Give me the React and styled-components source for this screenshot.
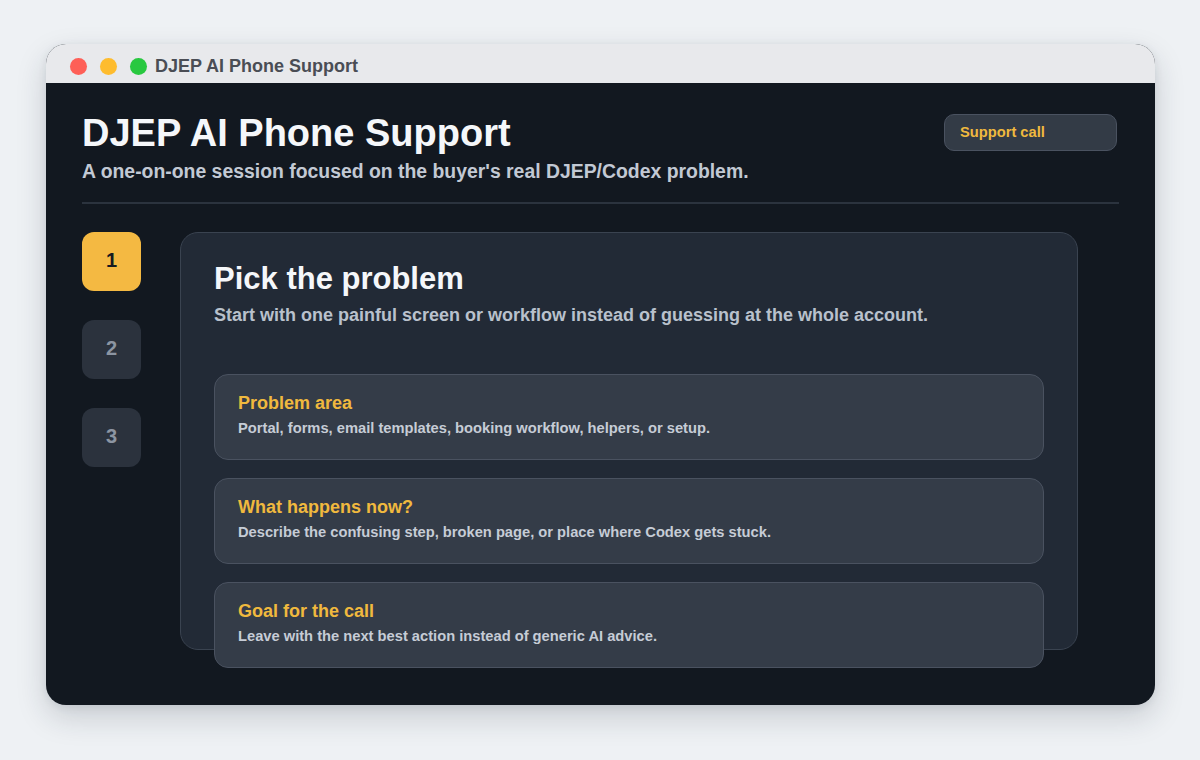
import React from 'react';
import styled, { createGlobalStyle } from 'styled-components';

const GlobalStyle = createGlobalStyle`
  html, body {
    margin: 0;
    padding: 0;
    background: #eef1f4;
    font-family: "Liberation Sans", Arial, sans-serif;
  }
`;

const Page = styled.div`
  width: 1200px;
  height: 760px;
  box-sizing: border-box;
  padding: 44px 45px 0 46px;
`;

const Window = styled.div`
  width: 1109px;
  height: 661px;
  border-radius: 20px;
  overflow: hidden;
  display: flex;
  flex-direction: column;
  background: #121820;
  box-shadow: 0 12px 30px rgba(30, 40, 55, 0.18), 0 2px 8px rgba(30, 40, 55, 0.08);
`;

const TitleBar = styled.div`
  height: 39px;
  box-sizing: border-box;
  flex: none;
  background: #e8e9ec;
  display: flex;
  align-items: center;
  padding: 5px 0 0 24px;
  gap: 13px;
`;

const Dot = styled.span`
  width: 17px;
  height: 17px;
  border-radius: 50%;
  background: ${(p) => p.color};
`;

const WindowTitle = styled.span`
  font-size: 18px;
  font-weight: 700;
  color: #4a4d55;
  margin-left: -5px;
`;

const Body = styled.div`
  flex: 1;
  padding: 29px 36px 0 36px;
`;

const Header = styled.div`
  display: flex;
  justify-content: space-between;
  align-items: flex-start;
`;

const Heading = styled.h1`
  margin: 0;
  font-size: 38px;
  line-height: 43px;
  font-weight: 700;
  color: #f5f7fa;
`;

const Lead = styled.p`
  margin: 5px 0 0;
  font-size: 19.4px;
  line-height: 22px;
  font-weight: 700;
  color: #c2c9d4;
`;

const Badge = styled.div`
  width: 173px;
  height: 37px;
  box-sizing: border-box;
  margin-top: 2px;
  margin-right: 2px;
  padding: 0 0 1px 15px;
  display: flex;
  align-items: center;
  border-radius: 10px;
  background: #333b46;
  border: 1px solid #4a5260;
  color: #f0b93e;
  font-size: 14.7px;
  font-weight: 700;
`;

const Divider = styled.hr`
  margin: 20px 0 28px;
  border: none;
  height: 2px;
  background: #2b333e;
`;

const Main = styled.div`
  display: grid;
  grid-template-columns: 59px 898px;
  column-gap: 39px;
  align-items: start;
`;

const Steps = styled.div`
  display: flex;
  flex-direction: column;
  gap: 29px;
`;

const Step = styled.div`
  width: 59px;
  height: 59px;
  border-radius: 12px;
  display: flex;
  align-items: center;
  justify-content: center;
  padding-bottom: 2px;
  box-sizing: border-box;
  font-size: 20px;
  font-weight: 700;
  background: ${(p) => (p.active ? '#f4b942' : '#2b323d')};
  color: ${(p) => (p.active ? '#161a20' : '#8c95a2')};
`;

const Card = styled.section`
  height: 418px;
  box-sizing: border-box;
  padding: 28px 33px 0;
  border-radius: 18px;
  background: #222a36;
  border: 1px solid #3a4350;
`;

const CardTitle = styled.h2`
  margin: 0;
  font-size: 31px;
  line-height: 36px;
  font-weight: 700;
  color: #f5f7fa;
`;

const CardLead = styled.p`
  margin: 8px 0 0;
  font-size: 18px;
  line-height: 21px;
  font-weight: 700;
  color: #b9c1cc;
`;

const Items = styled.div`
  margin-top: 48px;
  display: flex;
  flex-direction: column;
  gap: 18px;
`;

const Item = styled.div`
  height: 86px;
  box-sizing: border-box;
  padding: 18px 23px 0;
  border-radius: 14px;
  background: #343c48;
  border: 1px solid #4a5260;
`;

const ItemTitle = styled.div`
  font-size: 18px;
  line-height: 21px;
  font-weight: 700;
  color: #f0b93e;
`;

const ItemText = styled.div`
  margin-top: 5px;
  font-size: 14.7px;
  line-height: 18px;
  font-weight: 700;
  color: #c6ccd6;
`;

const items = [
  {
    title: 'Problem area',
    text: 'Portal, forms, email templates, booking workflow, helpers, or setup.',
  },
  {
    title: 'What happens now?',
    text: 'Describe the confusing step, broken page, or place where Codex gets stuck.',
  },
  {
    title: 'Goal for the call',
    text: 'Leave with the next best action instead of generic AI advice.',
  },
];

const App = () => (
  <>
    <GlobalStyle />
    <Page>
      <Window>
        <TitleBar>
          <Dot color="#fe5f57" />
          <Dot color="#febc2e" />
          <Dot color="#28c840" />
          <WindowTitle>DJEP AI Phone Support</WindowTitle>
        </TitleBar>
        <Body>
          <Header>
            <div>
              <Heading>DJEP AI Phone Support</Heading>
              <Lead>A one-on-one session focused on the buyer's real DJEP/Codex problem.</Lead>
            </div>
            <Badge>Support call</Badge>
          </Header>
          <Divider />
          <Main>
            <Steps>
              <Step active>1</Step>
              <Step>2</Step>
              <Step>3</Step>
            </Steps>
            <Card>
              <CardTitle>Pick the problem</CardTitle>
              <CardLead>
                Start with one painful screen or workflow instead of guessing at the whole account.
              </CardLead>
              <Items>
                {items.map((item) => (
                  <Item key={item.title}>
                    <ItemTitle>{item.title}</ItemTitle>
                    <ItemText>{item.text}</ItemText>
                  </Item>
                ))}
              </Items>
            </Card>
          </Main>
        </Body>
      </Window>
    </Page>
  </>
);

export default App;
